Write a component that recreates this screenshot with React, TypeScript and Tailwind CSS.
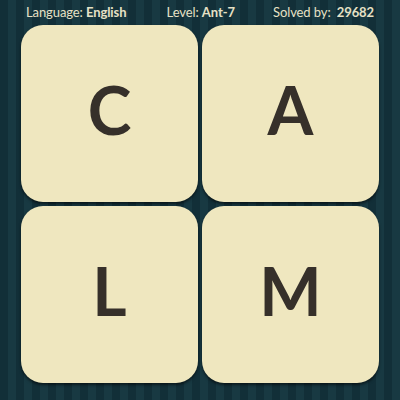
const tiles = ["C", "A", "L", "M"];

export default function App() {
    return (
        <main className="w-[400px] h-[400px] overflow-hidden bg-[#14313a] bg-[repeating-linear-gradient(90deg,#122f38_0px,#122f38_8px,#183942_8px,#183942_16px)] font-['Lato','Open_Sans',sans-serif]">
            <header className="flex justify-between items-center h-[24px] pl-[26px] pr-[26px] pt-[1px] text-[13px] tracking-[-0.1px] text-[#e6e1c6]">
                <span>
                    Language: <b className="font-bold">English</b>
                </span>
                <span className="ml-[2px]">
                    Level: <b className="font-bold">Ant-7</b>
                </span>
                <span>
                    Solved by: <b className="font-bold ml-[3px]">29682</b>
                </span>
            </header>

            <div className="grid grid-cols-[177px_177px] gap-[4px] pl-[21px] pt-[1px]">
                {tiles.map((letter) => (
                    <div
                        key={letter}
                        className="h-[177px] rounded-[22px] bg-[#efe7bf] shadow-[0_2px_3px_rgba(0,0,0,0.55)] flex items-center justify-center pb-[7px]"
                    >
                        <span className="text-[66px] leading-none font-bold text-[#36302a] font-['Lato',sans-serif]">
                            {letter}
                        </span>
                    </div>
                ))}
            </div>
        </main>
    );
}
